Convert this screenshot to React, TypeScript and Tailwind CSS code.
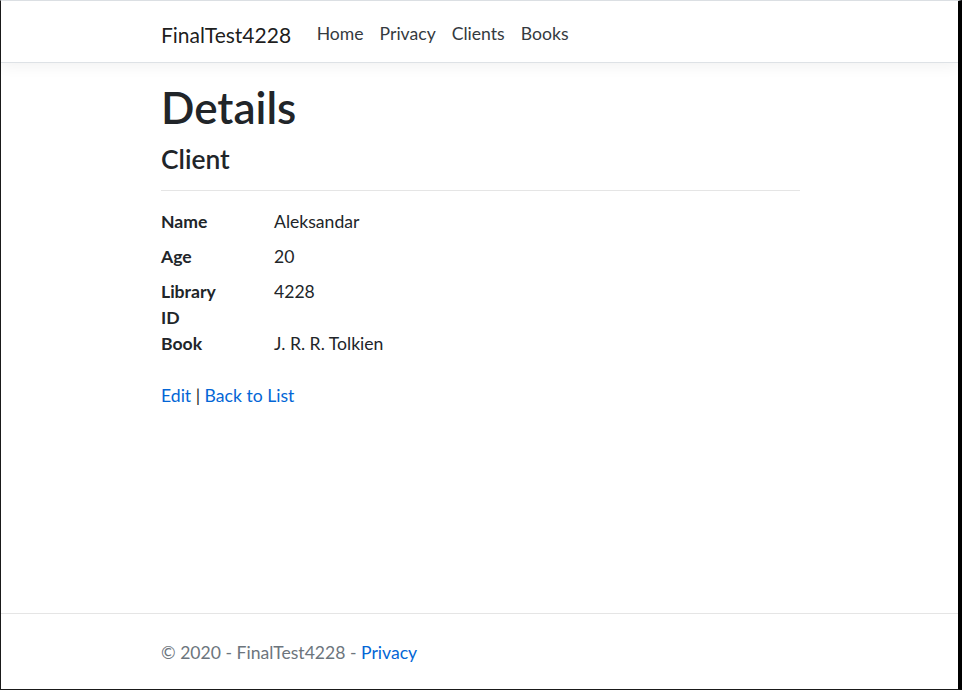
import React from 'react';

const rows: { label: string; value: string }[] = [
  { label: 'Name', value: 'Aleksandar' },
  { label: 'Age', value: '20' },
  { label: 'Library ID', value: '4228' },
  { label: 'Book', value: 'J. R. R. Tolkien' },
];

export default function App() {
  return (
    <div className="flex h-[690px] w-[962px] flex-col border-t border-l border-r-4 border-b border-t-[#dee2e6] border-l-[#1a1a1a] border-r-black border-b-[#1a1a1a] bg-white text-[17.6px] leading-[26px] text-[#212529] font-['Lato',sans-serif]">
      <nav className="flex h-[62px] shrink-0 items-center border-b border-[#dee2e6] bg-white pl-[160px] pt-[5px] shadow-[0_4px_13px_rgba(0,0,0,0.05)]">
        <a className="mr-[17.6px] text-[21px] leading-[33px] text-black/90">FinalTest4228</a>
        <ul className="flex">
          {['Home', 'Privacy', 'Clients', 'Books'].map((item) => (
            <li key={item}>
              <a className="block px-[8px] py-[8.8px] text-[#343a40]">{item}</a>
            </li>
          ))}
        </ul>
      </nav>

      <main className="flex-1 pt-[17.6px]">
        <div className="ml-[160px] w-[639px]">
          <h1 className="mb-[10.8px] text-[44px] font-semibold leading-[52.8px]">Details</h1>
          <h4 className="text-[26.4px] font-semibold leading-[31.7px]">Client</h4>
          <hr className="mt-[14.6px] mb-[18px] border-t border-[#e5e5e5]" />
          <dl className="mb-[17.6px] grid grid-cols-[113px_1fr]">
            {rows.map((r) => (
              <React.Fragment key={r.label}>
                <dt className="font-bold">{r.label === 'Library ID' ? <>Library<br />ID</> : r.label}</dt>
                <dd className="mb-[8.8px]">{r.value}</dd>
              </React.Fragment>
            ))}
          </dl>
          <div>
            <a className="text-[#0366d6]">Edit</a> | <a className="text-[#0366d6]">Back to List</a>
          </div>
        </div>
      </main>

      <footer className="flex h-[76px] shrink-0 items-center border-t border-[#e5e5e5] pl-[160px] pt-[2px] text-[#6c757d]">
        <span>
          © 2020 - FinalTest4228 - <a className="text-[#0366d6]">Privacy</a>
        </span>
      </footer>
    </div>
  );
}
